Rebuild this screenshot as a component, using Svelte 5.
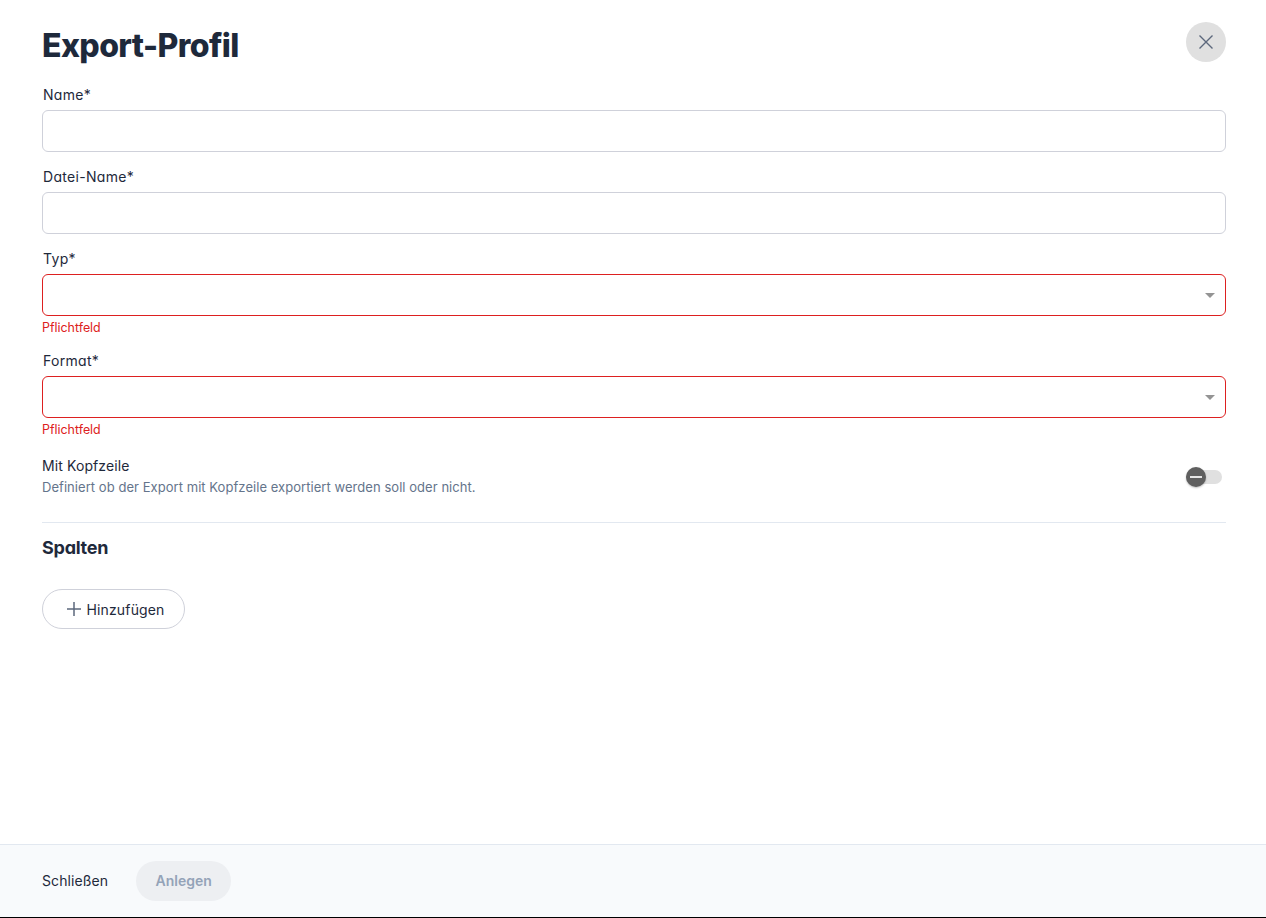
<script>
  let withHeader = $state(false);
  const fields = [
    { label: "Name*", select: false, error: false },
    { label: "Datei-Name*", select: false, error: false },
    { label: "Typ*", select: true, error: true },
    { label: "Format*", select: true, error: true }
  ];
</script>

<div class="dialog">
  <div class="content">
    <header class="head">
      <h1>Export-Profil</h1>
      <button class="close" aria-label="Schließen">
        <svg width="16" height="16" viewBox="0 0 16 16" fill="none" stroke="#5c687c" stroke-width="1.4">
          <path d="M1.5 1.5 L14.5 14.5 M14.5 1.5 L1.5 14.5" />
        </svg>
      </button>
    </header>

    {#each fields as field}
      <div class="field">
        <div class="label">{field.label}</div>
        <div class={field.error ? "input input-error" : "input"}>
          {#if field.select}
            <span class="caret"></span>
          {/if}
        </div>
        {#if field.error}
          <div class="error">Pflichtfeld</div>
        {/if}
      </div>
    {/each}

    <div class="toggle-row">
      <div>
        <div class="toggle-title">Mit Kopfzeile</div>
        <div class="toggle-desc">Definiert ob der Export mit Kopfzeile exportiert werden soll oder nicht.</div>
      </div>
      <button class="toggle" aria-label="Mit Kopfzeile" onclick={() => (withHeader = !withHeader)}>
        <span class="knob"><span class="dash"></span></span>
      </button>
    </div>

    <h2>Spalten</h2>

    <button class="add">
      <svg width="16" height="16" viewBox="0 0 16 16" fill="none" stroke="#5c687c" stroke-width="1.5">
        <path d="M8 1 V15 M1 8 H15" />
      </svg>
      Hinzufügen
    </button>
  </div>

  <footer class="foot">
    <button class="ghost">Schließen</button>
    <button class="primary" disabled>Anlegen</button>
  </footer>
</div>

<style>
  :global(body) {
    margin: 0;
    background: #fff;
  }

  .dialog {
    height: 918px;
    display: flex;
    flex-direction: column;
    box-sizing: border-box;
    border-bottom: 1px solid #000;
    font-family: Inter, "Noto Sans", sans-serif;
    color: #1e293b;
  }

  .content {
    flex: 1;
    padding: 22px 40px 0 42px;
  }

  .head {
    display: flex;
    justify-content: space-between;
    align-items: center;
    height: 40px;
    margin-bottom: 22px;
  }

  h1 {
    margin: 7px 0 0;
    font-size: 32px;
    font-weight: 800;
    letter-spacing: -0.6px;
    line-height: 40px;
    color: #1e293b;
  }

  .close {
    width: 40px;
    height: 40px;
    border: none;
    border-radius: 50%;
    background: #e0e0e0;
    display: flex;
    align-items: center;
    justify-content: center;
    padding: 0;
  }

  .field {
    margin-bottom: 14px;
  }

  .label {
    font-size: 14px;
    font-weight: 400;
    font-feature-settings: "cv11";
    line-height: 22px;
    letter-spacing: 0.3px;
    padding-left: 1px;
    margin-bottom: 6px;
    color: #1e293b;
    height: 20px;
  }

  .input {
    position: relative;
    height: 42px;
    box-sizing: border-box;
    border: 1px solid #cfd1da;
    border-radius: 6px;
    background: #fff;
  }

  .input-error {
    border-color: #dd2020;
  }

  .caret {
    position: absolute;
    right: 10px;
    top: 18px;
    border-left: 5px solid transparent;
    border-right: 5px solid transparent;
    border-top: 5px solid #949494;
  }

  .error {
    font-size: 12.4px;
    line-height: 16px;
    padding-top: 4px;
    color: #dd2020;
  }

  .toggle-row {
    display: flex;
    justify-content: space-between;
    align-items: center;
    padding-bottom: 25px;
    border-bottom: 1px solid #e2e8f0;
    margin-top: 18px;
  }

  .toggle-title {
    font-size: 14px;
    font-weight: 400;
    letter-spacing: 0.1px;
    line-height: 20px;
  }

  .toggle-desc {
    font-size: 13px;
    letter-spacing: 0.05px;
    line-height: 20px;
    margin-top: 1px;
    color: #64748b;
  }

  .toggle {
    position: relative;
    width: 36px;
    height: 14px;
    margin-right: 4px;
    padding: 0;
    border: none;
    border-radius: 7px;
    background: #e0e0e0;
  }

  .knob {
    position: absolute;
    left: 0;
    top: -3px;
    width: 20px;
    height: 20px;
    border-radius: 50%;
    background: #5f5f5f;
    box-shadow: 0 1px 2px rgba(0, 0, 0, 0.25);
    display: flex;
    align-items: center;
    justify-content: center;
  }

  .dash {
    width: 12px;
    height: 2px;
    background: #e6e6e6;
  }

  h2 {
    margin: 13px 0 29px;
    font-size: 18px;
    font-weight: 700;
    font-feature-settings: "cv11";
    letter-spacing: -0.25px;
    line-height: 24px;
    color: #1e293b;
  }

  .add {
    width: 143px;
    height: 40px;
    border: 1px solid #cfd1da;
    border-radius: 20px;
    background: #fff;
    display: flex;
    align-items: center;
    justify-content: center;
    gap: 4px;
    font: 400 14px Inter, "Noto Sans", sans-serif;
    letter-spacing: 0.15px;
    color: #1e293b;
    padding: 0 0 0 4px;
  }

  .foot {
    height: 73px;
    box-sizing: border-box;
    border-top: 1px solid #e2e8f0;
    background: #f8fafc;
    display: flex;
    align-items: center;
    gap: 28px;
    padding: 0 0 0 42px;
  }

  .ghost {
    border: none;
    background: none;
    padding: 0 0 1px;
    font: 400 14px Inter, "Noto Sans", sans-serif;
    letter-spacing: 0.1px;
    color: #1e293b;
  }

  .primary {
    width: 95px;
    height: 40px;
    border: none;
    border-radius: 20px;
    background: #edeff2;
    font: 600 14px Inter, "Noto Sans", sans-serif;
    color: #94a3b8;
    padding: 0 0 1px;
  }
</style>
